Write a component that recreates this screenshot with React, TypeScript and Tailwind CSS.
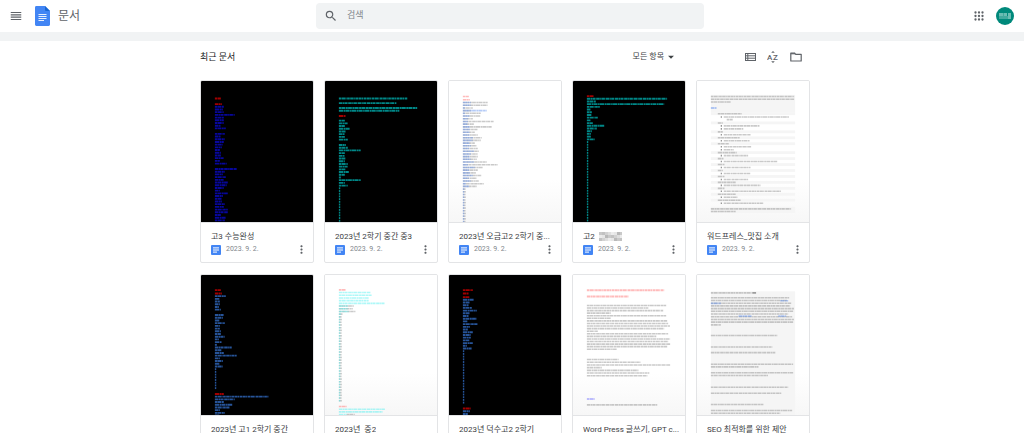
import type { ReactNode } from "react";
import { MdArrowDropDown, MdMoreVert, MdReorder, MdSearch } from "react-icons/md";

interface Run {
  y: number;
  x?: number;
  pitch?: number;
  color: string;
  widths: number[];
  opacity?: number;
  thick?: number;
}

interface Doc {
  title: string;
  date?: string;
  masked?: boolean;
  dark?: boolean;
  runs: Run[];
  bands?: number[][];
}

const PITCH = 2.73;
const RED = "#d80000";
const PINK = "#ff6b6b";
const BLUE = "#0a0ad0";
const STEEL = "#3470cc";
const TEAL = "#00b4b4";
const CYAN = "#4df0f0";
const SKY = "#5b8def";
const GRAY = "#8a8a8a";

const ticks = (count: number, width = 1.4): number[] => Array(count).fill(width);

const outline = [
  [33, 21, 24], [36.3, 27, 66], [39, 30, 6], [42.3, 21, 5], [45.3, 27, 36], [48.3, 27, 20],
  [51.3, 21, 5], [54.3, 27, 27], [57.3, 21, 22], [60.3, 27, 26], [63.3, 21, 11], [66.3, 27, 28],
  [69.3, 27, 10], [72.3, 21, 19], [75.3, 27, 25], [78.3, 21, 6], [81.3, 27, 54], [84.3, 21, 7],
  [87.3, 27, 27], [90.3, 21, 5], [93.3, 27, 27], [96.3, 21, 7], [99.3, 27, 25], [102.3, 21, 18],
  [105.3, 27, 37], [108.3, 21, 7], [111.3, 27, 58], [114.3, 21, 18], [117.3, 27, 14],
  [120.3, 21, 23], [123.3, 27, 40],
];

const docs: Doc[] = [
  {
    title: "고3 수능완성",
    date: "2023. 9. 2.",
    dark: true,
    runs: [
      { y: 17.7, color: RED, widths: [6] },
      { y: 23.3, color: RED, widths: [7] },
      {
        y: 26,
        color: BLUE,
        widths: [
          9, 8, 9, 20, 9, 9, 9, 6, 11, 0, 10, 6, 10, 9, 8, 7, 5, 6, 6, 9, 5, 12, 0, 22, 10, 8, 11,
          9, 13, 12, 9, 5, 13, 8, 7, 7, 10, 9, 13, 13, 6, 11, 10,
        ],
      },
    ],
  },
  {
    title: "2023년 2학기 중간 중3",
    date: "2023. 9. 2.",
    dark: true,
    runs: [
      { y: 17.7, color: TEAL, widths: [69] },
      { y: 22.3, color: TEAL, widths: [58] },
      { y: 27.3, color: TEAL, widths: [79, 61] },
      { y: 35.3, color: RED, widths: [7] },
      {
        y: 40,
        color: TEAL,
        widths: [
          6, 9, 6, 11, 7, 6, 6, 9, 0, 7, 9, 22, 6, 6, 7, 6, 9, 9, 7, 10, 6, 2, 22, 6, 9,
          ...ticks(13),
        ],
      },
    ],
  },
  {
    title: "2023년 오금고2 2학기 중...",
    date: "2023. 9. 2.",
    runs: [
      { y: 15.7, color: PINK, widths: [6] },
      { y: 19, color: PINK, widths: [7] },
      {
        y: 21.7,
        color: GRAY,
        widths: [
          25, 25, 10, 8, 18, 18, 10, 31, 11, 29, 15, 12, 15, 19, 18, 12, 14, 15, 16, 15, 15, 14, 24,
          35, 20, 15, 13, 19, 14, 16, 21, 14, ...ticks(13, 3),
        ],
      },
      {
        y: 21.7,
        color: SKY,
        widths: [
          8, 8, 2, 24, 2, 7, 5, 5, 5, 7, 7, 7, 7, 10, 10, 7, 8, 6, 11, 8, 7, 8, 11, 5, 12, 6, 7, 10,
          6, 8, 3, 6, ...ticks(13),
        ],
      },
    ],
  },
  {
    title: "고2",
    date: "2023. 9. 2.",
    masked: true,
    dark: true,
    runs: [
      { y: 15.3, color: RED, widths: [7] },
      {
        y: 17.9,
        color: TEAL,
        widths: [81, 9, 78, 13, 4, 5, 5, 11, 4, 6, 18, 10, 5, 4, 4, 8, ...ticks(30)],
      },
    ],
  },
  {
    title: "워드프레스_맛집 소개",
    date: "2023. 9. 2.",
    bands: [
      [14, 14, 85, 18],
      ...outline.filter((row) => row[1] === 21).map((row) => [14, row[0] - 1.4, 85, 2.8]),
      [14, 127, 85, 6],
    ],
    runs: [
      { y: 15.7, color: GRAY, widths: [84, 84, 20] },
      { y: 27.3, color: SKY, widths: [6], thick: 2 },
      ...outline.map(([y, x, w]) => ({ y, x, color: GRAY, widths: [w] })),
      ...outline
        .filter((row) => row[1] === 27)
        .map(([y]) => ({ y, x: 24, color: "#444444", widths: [1], opacity: 0.7 })),
      { y: 129, color: GRAY, widths: [81, 25] },
    ],
  },
  {
    title: "2023년 고1 2학기 중간",
    dark: true,
    runs: [
      { y: 15.3, color: RED, widths: [6] },
      { y: 18.7, color: RED, widths: [7] },
      {
        y: 21.3,
        color: STEEL,
        widths: [
          11, 5, 5, 5, 4, 6, 0, 9, 8, 5, 10, 5, 5, 6, 6, 10, 4, 7, 2, 17, 7, 9, 22, 5, 8, 5, 8,
          ...ticks(8),
        ],
      },
      { y: 120, color: RED, widths: [9] },
      { y: 122.7, color: STEEL, widths: [54, 20, 9, 18, 15, 5, 10, 5] },
    ],
  },
  {
    title: "2023년 \u00a0중2",
    runs: [
      { y: 15, color: PINK, widths: [7] },
      { y: 17.7, color: CYAN, widths: [32, 33, 30, 30, 46] },
      { y: 31.3, color: GRAY, widths: [15, 14, 17, 4, ...ticks(32, 3)] },
      { y: 31.3, color: CYAN, widths: [9, 9, 10, 2, ...ticks(32)] },
      { y: 132.7, color: PINK, widths: [8] },
      { y: 135.4, color: CYAN, widths: [47, 44, 8] },
      { y: 140.9, x: 22, color: GRAY, widths: [8] },
    ],
  },
  {
    title: "2023년 덕수고2 2학기",
    dark: true,
    runs: [
      { y: 15.3, color: RED, widths: [10] },
      { y: 18.7, color: RED, widths: [6] },
      { y: 22.3, color: RED, widths: [7] },
      {
        y: 25,
        color: STEEL,
        widths: [
          11, 7, 6, 9, 14, 7, 6, 14, 5, 15, 7, 5, 10, 8, 8, 7, 10, 4, 9, ...ticks(20),
        ],
      },
      { y: 134.7, color: RED, widths: [8] },
      { y: 137.5, color: STEEL, widths: [7, 5] },
    ],
  },
  {
    title: "Word Press 글쓰기, GPT c...",
    runs: [
      { y: 15.3, color: PINK, widths: [78], thick: 2 },
      { y: 21.8, color: PINK, widths: [42], thick: 2 },
      {
        y: 30.7,
        color: GRAY,
        widths: [80, 62, 77, 24, 80, 24, 81, 82, 84, 78, 11, 82, 70, 84, 82, 84, 81, 30],
        pitch: 2.6,
      },
      { y: 85.3, color: GRAY, widths: [32, 54, 84, 15, 52, 63, 61] },
      { y: 125, color: "#7373ff", widths: [8], thick: 2 },
      { y: 131, color: GRAY, widths: [71] },
    ],
  },
  {
    title: "SEO 최적화를 위한 제안",
    bands: [[14, 16.5, 85, 126]],
    runs: [
      { y: 18, color: GRAY, widths: [42] },
      { y: 18, x: 56, color: "#333333", widths: [4] },
      { y: 23, color: GRAY, widths: [79, 77, 81, 80, 84, 83, 78, 82, 84, 83, 10] },
      { y: 26, x: 84, color: SKY, widths: [8] },
      { y: 28.6, color: SKY, widths: [10] },
      { y: 41.5, x: 42, color: SKY, widths: [13] },
      { y: 41.5, x: 82, color: SKY, widths: [8] },
      { y: 61, color: GRAY, widths: [67] },
      { y: 72.7, color: GRAY, widths: [62] },
      { y: 78.3, color: GRAY, widths: [65] },
      { y: 90, color: GRAY, widths: [83, 48] },
      { y: 98.7, color: GRAY, widths: [83, 58] },
      { y: 113.3, color: GRAY, widths: [78] },
      { y: 119.3, color: GRAY, widths: [71] },
      { y: 130.7, color: GRAY, widths: [53] },
      { y: 136.7, color: GRAY, widths: [82, 70] },
    ],
  },
];

const dashes = ["2.7 0.4 3.2 0.3 1.2 0.5", "3.6 0.4 1.4 0.3 3.1 0.6", "2.2 0.3 3.8 0.5", "4.2 0.5 1.6 0.3"];

function Thumbnail({ doc }: { doc: Doc }) {
  return (
    <svg
      viewBox="0 0 113 142"
      preserveAspectRatio="xMidYMin slice"
      className={`block aspect-[113/142] w-full ${
        doc.dark ? "bg-black" : "bg-linear-to-b from-white from-70% to-[#f7f7f7]"
      }`}
      aria-hidden="true"
    >
      {doc.bands?.map(([x, y, w, h], i) => (
        <rect key={i} x={x} y={y} width={w} height={h} fill="#f5f5f5" />
      ))}
      {doc.runs.map((run, r) =>
        run.widths.map((w, i) => {
          const x = run.x ?? 14;
          const y = run.y + i * (run.pitch ?? PITCH);
          return w > 0 ? (
            <line
              key={`${r}-${i}`}
              x1={x}
              x2={x + w}
              y1={y}
              y2={y}
              stroke={run.color}
              strokeWidth={run.thick ?? (doc.dark ? 1.9 : 1.6)}
              strokeDasharray={dashes[(r + i) % dashes.length]}
              opacity={run.opacity ?? (doc.dark ? 0.75 : 0.45)}
            />
          ) : null;
        })
      )}
    </svg>
  );
}

function DocsLogo() {
  return (
    <svg width="15" height="20" viewBox="0 0 15 20" aria-hidden="true">
      <path d="M1.4 0H10l5 5v13.6c0 .8-.6 1.4-1.4 1.4H1.4C.6 20 0 19.4 0 18.6V1.4C0 .6.6 0 1.4 0z" fill="#4285f4" />
      <path d="M10 0l5 5h-3.7C10.5 5 10 4.5 10 3.7z" fill="#1967d2" />
      <path d="M3.5 8.5h8M3.5 10.5h8M3.5 12.5h8M3.5 14.5h5.5" stroke="#e8f0fe" strokeWidth="1" />
    </svg>
  );
}

function DocBadge() {
  return (
    <svg width="10" height="10" viewBox="0 0 10 10" className="shrink-0" aria-hidden="true">
      <rect width="10" height="10" rx="1" fill="#4285f4" />
      <path d="M2 2.9h6M2 5h6M2 7.1h4" stroke="#fff" strokeWidth="1" />
    </svg>
  );
}

function AppsIcon() {
  return (
    <svg width="10" height="10" viewBox="0 0 10 10" fill="currentColor" aria-hidden="true">
      {[1.5, 5, 8.5].map((cy) =>
        [1.5, 5, 8.5].map((cx) => <circle key={`${cx}-${cy}`} cx={cx} cy={cy} r="1.15" />)
      )}
    </svg>
  );
}

function SortIcon() {
  return (
    <svg width="12" height="12" viewBox="0 0 12 12" fill="currentColor" aria-hidden="true">
      <text x="0" y="9" fontSize="8" fontWeight="500">
        A
      </text>
      <text x="6" y="9" fontSize="8" fontWeight="500">
        Z
      </text>
      <path d="M6 0l1.8 1.8H4.2zM6 12l1.8-1.8H4.2z" />
    </svg>
  );
}

function MaskedName() {
  const shades = ["#c9c9c9", "#dedede", "#b9b9b9", "#d2d2d2", "#e6e6e6", "#c2c2c2", "#ececec"];
  return (
    <svg width="23" height="9" viewBox="0 0 23 9" className="shrink-0" aria-hidden="true">
      {Array.from({ length: 24 }, (_, i) => (
        <rect
          key={i}
          x={(i % 8) * 3}
          y={Math.floor(i / 8) * 3}
          width="3"
          height="3"
          fill={shades[(i * 5 + Math.floor(i / 8)) % shades.length]}
        />
      ))}
    </svg>
  );
}

function IconButton({ label, children }: { label: string; children: ReactNode }) {
  return (
    <button
      type="button"
      aria-label={label}
      className="flex size-5 shrink-0 cursor-pointer items-center justify-center rounded-full text-[#5f6368] hover:bg-gray-100"
    >
      {children}
    </button>
  );
}

function DocCard({ doc }: { doc: Doc }) {
  return (
    <article className="min-w-0 overflow-hidden rounded-xs border border-[#e3e4e6] bg-white">
      <Thumbnail doc={doc} />
      <div className="border-t border-[#e3e4e6] pt-2 pb-[5px] pl-[10px]">
        <h3 className="flex h-3 items-center gap-1 pr-1 text-[8px] leading-3 text-[#3c4043]">
          <a href="#" className="truncate">
            {doc.title}
          </a>
          {doc.masked && <MaskedName />}
        </h3>
        {doc.date && (
          <div className="flex h-[14px] items-center gap-[5px] pr-[2px]">
            <DocBadge />
            <span className="flex-1 text-[7px] text-[#80868b]">{doc.date}</span>
            <IconButton label="추가 작업">
              <MdMoreVert size={13} />
            </IconButton>
          </div>
        )}
      </div>
    </article>
  );
}

export default function App() {
  return (
    <div className="flex h-screen flex-col overflow-hidden bg-white font-[Roboto,'Noto_Sans_CJK_KR',sans-serif] text-[#3c4043]">
      {/* Header */}
      <header className="grid h-8 shrink-0 grid-cols-[316px_1fr_320px] items-center">
        <div className="flex items-center pl-[6px]">
          <IconButton label="기본 메뉴">
            <MdReorder size={14} />
          </IconButton>
          <a href="#" className="flex items-center gap-2 pl-[9px] text-xs text-[#5f6368]">
            <DocsLogo />
            문서
          </a>
        </div>
        <form role="search" className="flex h-[26px] items-center rounded-sm bg-[#f1f3f4] pl-[5px]">
          <IconButton label="검색">
            <MdSearch size={14} />
          </IconButton>
          <input
            type="text"
            aria-label="검색"
            placeholder="검색"
            className="min-w-0 flex-1 bg-transparent pl-[6px] text-[9px] outline-none placeholder:text-[#80868b]"
          />
        </form>
        <div className="flex items-center justify-end gap-[7px] pr-[10px]">
          <IconButton label="Google 앱">
            <AppsIcon />
          </IconButton>
          <button type="button" aria-label="계정" className="cursor-pointer">
            <svg width="18" height="18" viewBox="0 0 18 18" aria-hidden="true">
              <circle cx="9" cy="9" r="9" fill="#00897b" />
              <path d="M3 6h4v3H3zM8 6h3v3H8zM12 6h3v6h-3z" fill="#6bbcb3" />
              <path d="M3 9h4v3H3zM7 6h1v6H7zM8 9h4v3H8z" fill="#43a99e" />
            </svg>
          </button>
        </div>
      </header>
      <div className="h-[9px] shrink-0 bg-[#f1f3f4]" />

      {/* Documents */}
      <main className="min-h-0 flex-1 overflow-hidden pr-[14px]">
        <div className="mx-auto max-w-[610px]">
          <div className="flex h-[39px] items-center pb-[7px]">
            <h2 className="flex-1 pt-[2px] text-[9px] text-[#202124]">최근 문서</h2>
            <button
              type="button"
              className="mr-[62px] flex cursor-pointer items-center text-[8px] text-[#3c4043]"
            >
              모든 항목
              <MdArrowDropDown size={14} />
            </button>
            <div className="flex items-center gap-[3px] pr-1">
              <IconButton label="목록 보기">
                <svg width="11" height="8" viewBox="0 0 11 8" fill="none" stroke="currentColor">
                  <rect x="0.5" y="0.5" width="10" height="7" />
                  <path d="M0 2.8h11M0 5.2h11M2.8 0v8" strokeWidth="1" />
                </svg>
              </IconButton>
              <IconButton label="정렬 옵션">
                <SortIcon />
              </IconButton>
              <IconButton label="파일 선택도구 열기">
                <svg
                  width="12"
                  height="10"
                  viewBox="0 0 12 10"
                  fill="none"
                  stroke="currentColor"
                  strokeWidth="1.2"
                  strokeLinejoin="round"
                >
                  <path d="M.8 9V1h3.7l1.2 1.3h5.5V9z" />
                  <path d="M.8 1.7h4.2" />
                </svg>
              </IconButton>
            </div>
          </div>

          <div className="grid grid-cols-5 gap-x-[10px] gap-y-[11px]">
            {docs.map((doc) => (
              <DocCard key={doc.title} doc={doc} />
            ))}
          </div>
        </div>
      </main>
    </div>
  );
}
